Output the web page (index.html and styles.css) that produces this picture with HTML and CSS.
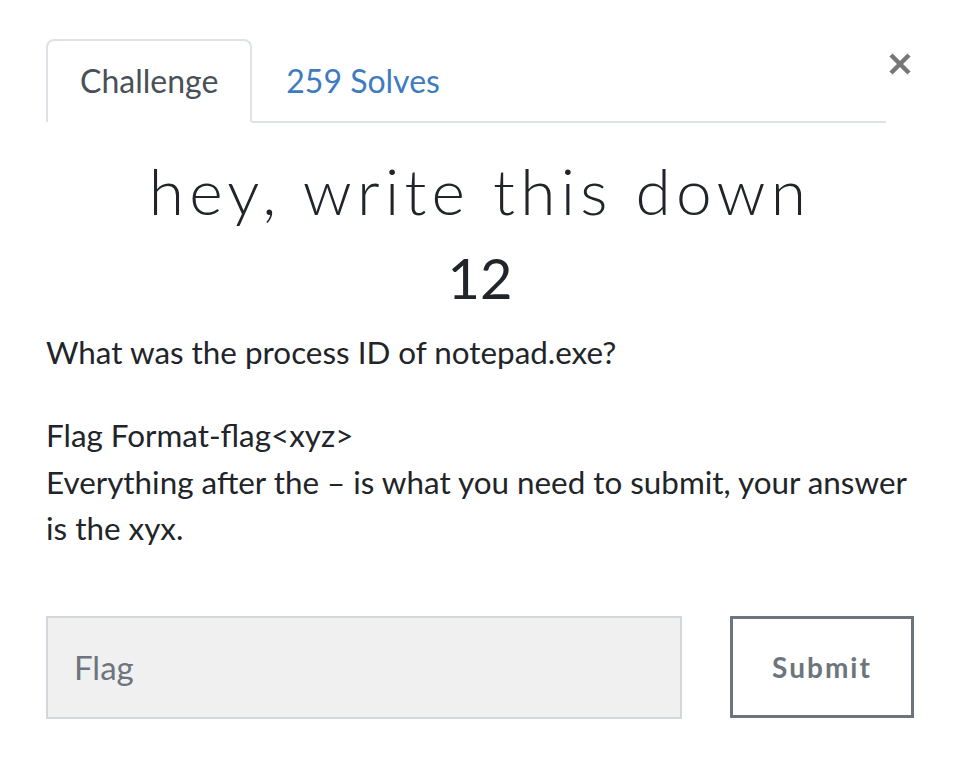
FILE: index.html
```html
<!DOCTYPE html>
<html lang="en">
<head>
    <meta charset="UTF-8">
    <meta name="viewport" content="width=device-width, initial-scale=1.0">
    <title>hey, write this down</title>
    <link rel="stylesheet" href="styles.css">
</head>
<body>
    <div class="modal">
        <div class="modal-head">
            <ul class="tabs">
                <li class="tab active">Challenge</li>
                <li class="tab">259 Solves</li>
            </ul>
            <button type="button" class="close" aria-label="Close">
                <svg width="24" height="22" viewBox="0 0 24 22">
                    <path d="M3 2 L21 20 M21 2 L3 20" stroke="#777" stroke-width="4.5" stroke-linecap="butt" fill="none"/>
                </svg>
            </button>
        </div>

        <h2 class="challenge-name">hey, write this down</h2>
        <h3 class="challenge-value">12</h3>

        <div class="challenge-desc">
            <p>What was the process ID of notepad.exe?</p>
            <p>Flag Format-flag&lt;xyz&gt;<br>
            Everything after the – is what you need to submit, your answer is the xyx.</p>
        </div>

        <form class="submit-row">
            <input type="text" class="flag-input" placeholder="Flag">
            <button type="submit" class="submit-btn">Submit</button>
        </form>
    </div>
</body>
</html>
```

FILE: styles.css
```css
body {
    margin: 0;
    font-family: Lato, "Open Sans", sans-serif;
    color: #212529;
    background-color: #fff;
}
.modal {
    padding: 39px 40px 0 46px;
}
.modal-head {
    display: flex;
    align-items: flex-start;
}
.tabs {
    flex: 1;
    display: flex;
    list-style: none;
    margin: 0;
    padding: 0;
    border-bottom: 2px solid #dee2e6;
}
.tab {
    font-size: 32px;
    line-height: 48px;
    padding: 16px 32px;
    border: 2px solid transparent;
    border-radius: 8px 8px 0 0;
    margin-bottom: -2px;
    color: #3f7bbf;
}
.tab.active {
    color: #495057;
    border-color: #dee2e6 #dee2e6 #fff;
    background-color: #fff;
}
.close {
    width: 28px;
    margin-top: 14px;
    padding: 0;
    border: none;
    background: none;
    display: flex;
    justify-content: center;
}
.challenge-name {
    margin: 30px 0 0;
    text-align: center;
    font-size: 64px;
    font-weight: 300;
    letter-spacing: 5.3px;
    line-height: 1.2;
}
.challenge-value {
    margin: 14px 0 0;
    text-align: center;
    font-size: 56px;
    font-weight: 400;
    line-height: 1.2;
}
.challenge-desc {
    margin-top: 18px;
    font-size: 31.4px;
    line-height: 46.5px;
}
.challenge-desc p {
    margin: 0 0 37px;
}
.submit-row {
    display: flex;
    gap: 48px;
    margin-top: 64px;
}
.flag-input {
    flex: 1;
    height: 103px;
    box-sizing: border-box;
    padding: 0 26px;
    font-family: Lato, sans-serif;
    font-size: 33px;
    background-color: #f0f0f0;
    border: 2px solid #d3d6da;
    border-radius: 0;
    color: #495057;
}
.flag-input::placeholder {
    color: #6c757d;
}
.submit-btn {
    width: 184px;
    height: 102px;
    box-sizing: border-box;
    background-color: #fff;
    border: 3px solid #6c757d;
    border-radius: 0;
    font-family: Lato, sans-serif;
    font-size: 28px;
    font-weight: 700;
    letter-spacing: 2px;
    color: #6c757d;
}
```
